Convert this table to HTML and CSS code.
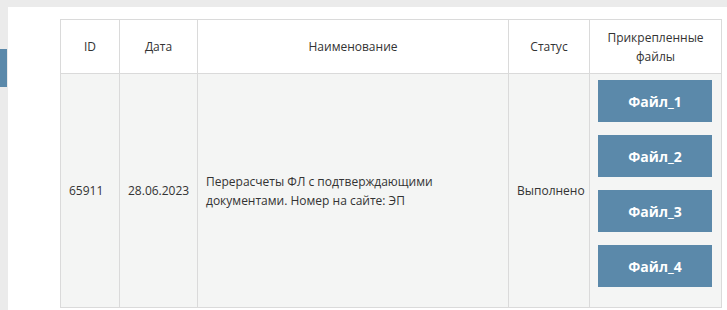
FILE: index.html
```html
<!DOCTYPE html>
<html lang="ru">
<head>
<meta charset="utf-8">
<link rel="stylesheet" href="styles.css">
</head>
<body>
<div class="side-tab"></div>
<main class="panel">
  <table class="orders">
    <colgroup>
      <col class="c-id"><col class="c-date"><col class="c-name"><col class="c-status"><col class="c-files">
    </colgroup>
    <thead>
      <tr>
        <th>ID</th>
        <th>Дата</th>
        <th>Наименование</th>
        <th>Статус</th>
        <th>Прикрепленные<br>файлы</th>
      </tr>
    </thead>
    <tbody>
      <tr>
        <td>65911</td>
        <td>28.06.2023</td>
        <td>Перерасчеты ФЛ с подтверждающими документами. Номер на сайте: ЭП</td>
        <td>Выполнено</td>
        <td class="files">
          <a class="file-btn">Файл_1</a>
          <a class="file-btn">Файл_2</a>
          <a class="file-btn">Файл_3</a>
          <a class="file-btn">Файл_4</a>
        </td>
      </tr>
    </tbody>
  </table>
</main>
</body>
</html>
```
FILE: styles.css
```css
html, body {
  margin: 0;
  padding: 0;
}
body {
  background: #ebebeb;
  display: flex;
  align-items: flex-start;
  font-family: "Open Sans", "Noto Sans", sans-serif;
  font-size: 12px;
  color: #333;
}
.side-tab {
  flex: none;
  width: 7px;
  height: 38px;
  margin-top: 49px;
  background: #5b89aa;
}
.panel {
  flex: 1;
  box-sizing: border-box;
  background: #fff;
  margin: 7px 0 0 1px;
  padding: 12px 0 0 52px;
  min-height: 303px;
}
.orders {
  border-collapse: collapse;
  table-layout: fixed;
  width: 661px;
}
.c-id { width: 59px; }
.c-date { width: 78px; }
.c-name { width: 311px; }
.c-status { width: 81px; }
.c-files { width: 132px; }
.orders th, .orders td {
  border: 1px solid #dadada;
}
.orders th {
  background: #fff;
  font-weight: normal;
  height: 53px;
  padding: 0 8px;
  line-height: 19px;
  text-align: center;
  vertical-align: middle;
}
.orders td {
  background: #f4f5f4;
  padding: 0 8px;
  line-height: 19px;
  text-align: left;
  vertical-align: middle;
}
.orders td.files {
  padding: 6px 7px 20px 8px;
}
.file-btn {
  display: flex;
  align-items: center;
  justify-content: center;
  width: 114px;
  height: 42px;
  margin-bottom: 13px;
  background: #5b89aa;
  color: #fff;
  font-weight: bold;
  font-size: 14px;
}
.file-btn:last-child {
  margin-bottom: 0;
}
```
